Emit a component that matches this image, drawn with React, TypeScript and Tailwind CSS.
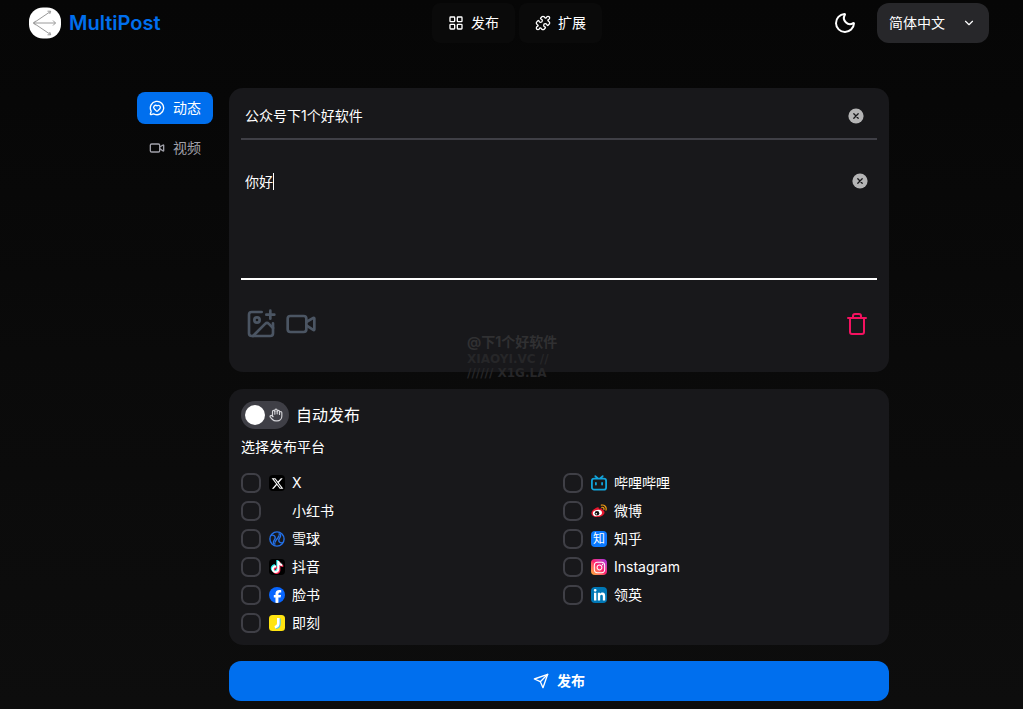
import { useState } from 'react';
import type { ReactNode } from 'react';
import { ChevronDown, Hand, ImagePlus, LayoutGrid, MessageCircleHeart, Moon, Puzzle, Trash, Video } from 'lucide-react';
import { FaFacebookF, FaInstagram, FaLinkedinIn, FaTiktok, FaXTwitter } from 'react-icons/fa6';

type Platform = {
    id: string;
    name: string;
    icon: ReactNode;
};

function Logo() {
    return (
        <svg viewBox="0 0 32 32" className="h-8 w-8" fill="none" stroke="#9a9a9a" strokeWidth="1">
            <rect x="0" y="0.5" width="32" height="31" rx="14" fill="#fff" stroke="none" />
            <path d="M4.5 16 21.5 4.5M4.5 16h22M4.5 16l17 11.5" />
            <path d="M18.5 4.2h3.2l-1 2.8M24 13.5l2.5 2.5-2.5 2.5M18.5 27.8h3.2l-1-2.8M6.5 14.2 4.5 16l2 1.8" />
        </svg>
    );
}

function SendIcon() {
    return (
        <svg viewBox="0 0 24 24" className="h-4 w-4" fill="none" stroke="currentColor" strokeWidth="2" strokeLinecap="round" strokeLinejoin="round">
            <path d="M22 2 15 22 11 13 2 9Z" />
            <path d="M22 2 11 13" />
        </svg>
    );
}

function ClearButton({ label, onClick }: { label: string; onClick: () => void }) {
    return (
        <button type="button" aria-label={label} onClick={onClick} className="flex h-[18px] w-[18px] shrink-0 items-center justify-center">
            <svg viewBox="0 0 16 16" className="h-4 w-4">
                <circle cx="8" cy="8" r="7.6" fill="#b4b4b5" />
                <path d="m5.8 5.8 4.4 4.4m0-4.4-4.4 4.4" stroke="#18181b" strokeWidth="1.3" strokeLinecap="round" />
            </svg>
        </button>
    );
}

function XueqiuIcon() {
    return (
        <svg viewBox="0 0 16 16" className="h-4 w-4" fill="none" stroke="#2370e8" strokeWidth="1.4" strokeLinecap="round">
            <circle cx="8" cy="8" r="7.1" />
            <path d="M2.4 4.2c2.400-.4 4 .8 3.800 2.800S4.200 9.400 4.400 11.400 5.400 13 6 13" />
            <path d="M13.600 11.800c-2.400.4-4-.8-3.800-2.800s2-2.400 1.800-4.400S10.600 3 10 3" />
            <path d="M6 11.200 7.800 8M8.200 8 10 4.800" />
        </svg>
    );
}

function DouyinIcon() {
    return (
        <span className="relative block h-4 w-4 rounded-sm bg-black">
            <FaTiktok size={12} className="absolute left-px top-px text-[#25f4ee]" />
            <FaTiktok size={12} className="absolute left-[3px] top-[3px] text-[#fe2c55]" />
            <FaTiktok size={12} className="absolute left-[2px] top-[2px] text-white" />
        </span>
    );
}

function JikeIcon() {
    return (
        <svg viewBox="0 0 16 16" className="h-4 w-4">
            <rect width="16" height="16" rx="3.5" fill="#ffe411" />
            <path d="M10.7 3.5v5.3c0 2.6-1.5 4-4 4.3" fill="none" stroke="#4fc8ee" strokeWidth="2" />
            <path d="M9.3 3v5.5c0 2.2-1.1 3.2-3.5 3.7" fill="none" stroke="#fff" strokeWidth="2.6" />
        </svg>
    );
}

function BilibiliIcon() {
    return (
        <svg viewBox="0 0 16 16" className="h-4 w-4" fill="none" stroke="#12a5dd" strokeWidth="1.8" strokeLinecap="round">
            <rect x="0.9" y="3.6" width="14.2" height="11" rx="2.2" />
            <path d="M4.3 1.1 6.3 3M11.7 1.1 9.7 3M4.9 8v1.5M11.1 8v1.5" />
        </svg>
    );
}

function WeiboIcon() {
    return (
        <svg viewBox="0 0 16 16" className="h-4 w-4">
            <path d="M6.3 4.4c1.2-.3 1.8.4 1.5 1.5 2-.8 4-.7 3.6 1.2 1.4.4 2.2 1.2 2.1 2.5-.2 2.4-3.3 4.5-7 4.5C3 14.1.4 12.6.4 10.2c0-2.2 3.3-5.2 5.900-5.800Z" fill="#e6162d" />
            <ellipse cx="6.4" cy="10" rx="4.6" ry="3.1" transform="rotate(-8 6.4 10)" fill="#fff" />
            <circle cx="6" cy="10.2" r="2.3" fill="#111" />
            <circle cx="5.3" cy="10.8" r=".8" fill="#fff" />
            <path d="M10.3 2.1c3.1-.6 5.600 1.900 4.700 5M10.8 4.300c1.500-.3 2.500.8 2.100 2.200" fill="none" stroke="#f29b12" strokeWidth="1.2" strokeLinecap="round" />
        </svg>
    );
}

const platforms: Platform[] = [
    {
        id: 'x',
        name: 'X',
        icon: (
            <span className="flex h-4 w-4 items-center justify-center rounded-sm bg-black text-white">
                <FaXTwitter size={13} />
            </span>
        ),
    },
    { id: 'bilibili', name: '哔哩哔哩', icon: <BilibiliIcon /> },
    { id: 'rednote', name: '小红书', icon: null },
    { id: 'weibo', name: '微博', icon: <WeiboIcon /> },
    { id: 'xueqiu', name: '雪球', icon: <XueqiuIcon /> },
    {
        id: 'zhihu',
        name: '知乎',
        icon: (
            <span aria-hidden="true" className="flex h-4 w-4 items-center justify-center rounded-sm bg-[#0a79ff] text-xs leading-4 text-white">
                知
            </span>
        ),
    },
    { id: 'douyin', name: '抖音', icon: <DouyinIcon /> },
    {
        id: 'instagram',
        name: 'Instagram',
        icon: (
            <span className="flex h-4 w-4 items-center justify-center rounded-sm bg-linear-to-tr from-[#ffb020] via-[#ff1f6e] to-[#a51fe8] text-white">
                <FaInstagram size={13} />
            </span>
        ),
    },
    {
        id: 'facebook',
        name: '脸书',
        icon: (
            <span className="flex h-4 w-4 items-end justify-center overflow-hidden rounded-full bg-[#0866ff] text-white">
                <FaFacebookF size={13} />
            </span>
        ),
    },
    {
        id: 'linkedin',
        name: '领英',
        icon: (
            <span className="flex h-4 w-4 items-center justify-center rounded-sm bg-[#0077b5] text-white">
                <FaLinkedinIn size={13} />
            </span>
        ),
    },
    { id: 'jike', name: '即刻', icon: <JikeIcon /> },
];

function Header() {
    return (
        <header className="flex h-[46px] items-center pl-[29px] pr-[34px]">
            <div className="flex flex-1">
                <a href="#home" className="flex items-center gap-2">
                    <Logo />
                    <span className="text-xl font-semibold text-[#006fee]">MultiPost</span>
                </a>
            </div>

            <nav className="ml-4 flex gap-1 text-sm text-white">
                <a href="#publish" className="flex h-10 items-center gap-[7px] rounded-lg bg-[#0a0a0a] px-4">
                    <LayoutGrid size={16} />
                    发布
                </a>
                <a href="#extension" className="flex h-10 items-center gap-[7px] rounded-lg bg-[#0a0a0a] px-4">
                    <Puzzle size={16} />
                    扩展
                </a>
            </nav>

            <div className="flex flex-1 items-center justify-end gap-5">
                <button type="button" aria-label="切换主题" className="text-white">
                    <Moon size={24} />
                </button>
                <div className="relative">
                    <select aria-label="语言" className="h-10 w-28 appearance-none rounded-xl bg-[#27272a] pl-3 text-sm text-white">
                        <option>简体中文</option>
                        <option>English</option>
                    </select>
                    <ChevronDown size={14} className="pointer-events-none absolute right-[13px] top-[13px] text-white" />
                </div>
            </div>
        </header>
    );
}

export default function App() {
    const [title, setTitle] = useState('公众号下1个好软件');
    const [content, setContent] = useState('你好');
    const [autoPublish, setAutoPublish] = useState(false);
    const [selected, setSelected] = useState<string[]>([]);

    const togglePlatform = (id: string) => {
        setSelected((prev) => (prev.includes(id) ? prev.filter((item) => item !== id) : [...prev, id]));
    };

    return (
        <div className="min-h-screen bg-linear-to-b from-[#060606] via-[#0a0a0a] to-[#0d0d0d] pb-2 font-['Inter','Noto_Sans_CJK_SC',sans-serif] text-white">
            <Header />

            <main className="pr-px pt-[42px]">
                <div className="mx-auto flex max-w-[756px] items-start gap-3">
                    {/* Post type tabs */}
                    <div role="tablist" className="flex shrink-0 flex-col gap-2 p-1 text-sm">
                        <button type="button" role="tab" aria-selected="true" className="flex h-8 items-center gap-2 rounded-lg bg-[#006fee] px-3 text-white">
                            <MessageCircleHeart size={16} />
                            动态
                        </button>
                        <button type="button" role="tab" aria-selected="false" className="flex h-8 items-center gap-2 rounded-lg px-3 text-[#a1a1aa]">
                            <Video size={16} />
                            视频
                        </button>
                    </div>

                    <div className="min-w-0 flex-1">
                        {/* Editor */}
                        <section className="relative rounded-[14px] bg-[#18181b] px-3 pb-8 pt-1">
                            <div className="flex h-12 items-center border-b-2 border-[#3f3f46] pl-1 pr-3 pt-px">
                                <input
                                    aria-label="标题"
                                    value={title}
                                    onChange={(e) => setTitle(e.target.value)}
                                    className="min-w-0 flex-1 bg-transparent text-sm outline-none"
                                />
                                <ClearButton label="清空标题" onClick={() => setTitle('')} />
                            </div>

                            <div className="relative mt-4 flex h-[124px] items-start border-b-2 border-white pl-1 pr-2 pt-4">
                                <textarea
                                    aria-label="内容"
                                    value={content}
                                    onChange={(e) => setContent(e.target.value)}
                                    className="h-full min-w-0 flex-1 resize-none bg-transparent text-sm caret-transparent outline-none"
                                />
                                {/* Text caret */}
                                {content === '你好' && <span className="absolute left-8 top-[17px] h-[17px] w-px bg-white" />}
                                <ClearButton label="清空内容" onClick={() => setContent('')} />
                            </div>

                            <div className="mt-7 flex items-center justify-between px-1">
                                <div className="flex gap-2 text-[#4b5563]">
                                    <button type="button" aria-label="添加图片">
                                        <ImagePlus size={32} />
                                    </button>
                                    <button type="button" aria-label="添加视频">
                                        <Video size={32} />
                                    </button>
                                </div>
                                <button type="button" aria-label="删除" className="mr-1 text-[#f31260]">
                                    <Trash size={24} />
                                </button>
                            </div>

                            <div className="pointer-events-none absolute left-[238px] top-[244px] whitespace-nowrap">
                                <p className="text-sm font-bold leading-5 text-[#303032]">@下1个好软件</p>
                                <p className="font-['DejaVu_Sans',sans-serif] text-xs font-bold leading-[14px] text-[#262628]">
                                    XIAOYI.VC //
                                    <br />
                                    ////// X1G.LA
                                </p>
                            </div>
                        </section>

                        {/* Platforms */}
                        <section className="mt-[17px] rounded-[14px] bg-[#18181b] p-3">
                            <label className="flex items-center gap-[7px]">
                                <span className="relative block h-7 w-12">
                                    <input
                                        type="checkbox"
                                        role="switch"
                                        checked={autoPublish}
                                        onChange={() => setAutoPublish(!autoPublish)}
                                        className="block h-7 w-12 appearance-none rounded-full bg-[#3f3f46] checked:bg-[#006fee]"
                                    />
                                    <span className={`pointer-events-none absolute top-1 h-5 w-5 rounded-full bg-white ${autoPublish ? 'right-1' : 'left-1'}`} />
                                    {!autoPublish && <Hand size={14} className="pointer-events-none absolute right-[6px] top-[7px] text-[#d4d4d8]" />}
                                </span>
                                自动发布
                            </label>

                            <fieldset className="mt-2">
                                <legend className="text-sm">选择发布平台</legend>
                                <div className="mt-4 grid grid-cols-2 gap-2">
                                    {platforms.map((platform) => (
                                        <label key={platform.id} className="flex h-5 items-center text-sm">
                                            <input
                                                type="checkbox"
                                                checked={selected.includes(platform.id)}
                                                onChange={() => togglePlatform(platform.id)}
                                                className="mr-2 h-5 w-5 shrink-0 appearance-none rounded-[7px] border-2 border-[#3f3f46] checked:border-[#006fee] checked:bg-[#006fee]"
                                            />
                                            <span className="mr-[7px] block h-4 w-4 shrink-0">{platform.icon}</span>
                                            {platform.name}
                                        </label>
                                    ))}
                                </div>
                            </fieldset>
                        </section>

                        <button
                            type="button"
                            className="mt-4 flex h-10 w-full items-center justify-center gap-2 rounded-xl bg-[#006fee] text-sm font-bold text-white"
                        >
                            <SendIcon />
                            发布
                        </button>
                    </div>
                </div>
            </main>
        </div>
    );
}
